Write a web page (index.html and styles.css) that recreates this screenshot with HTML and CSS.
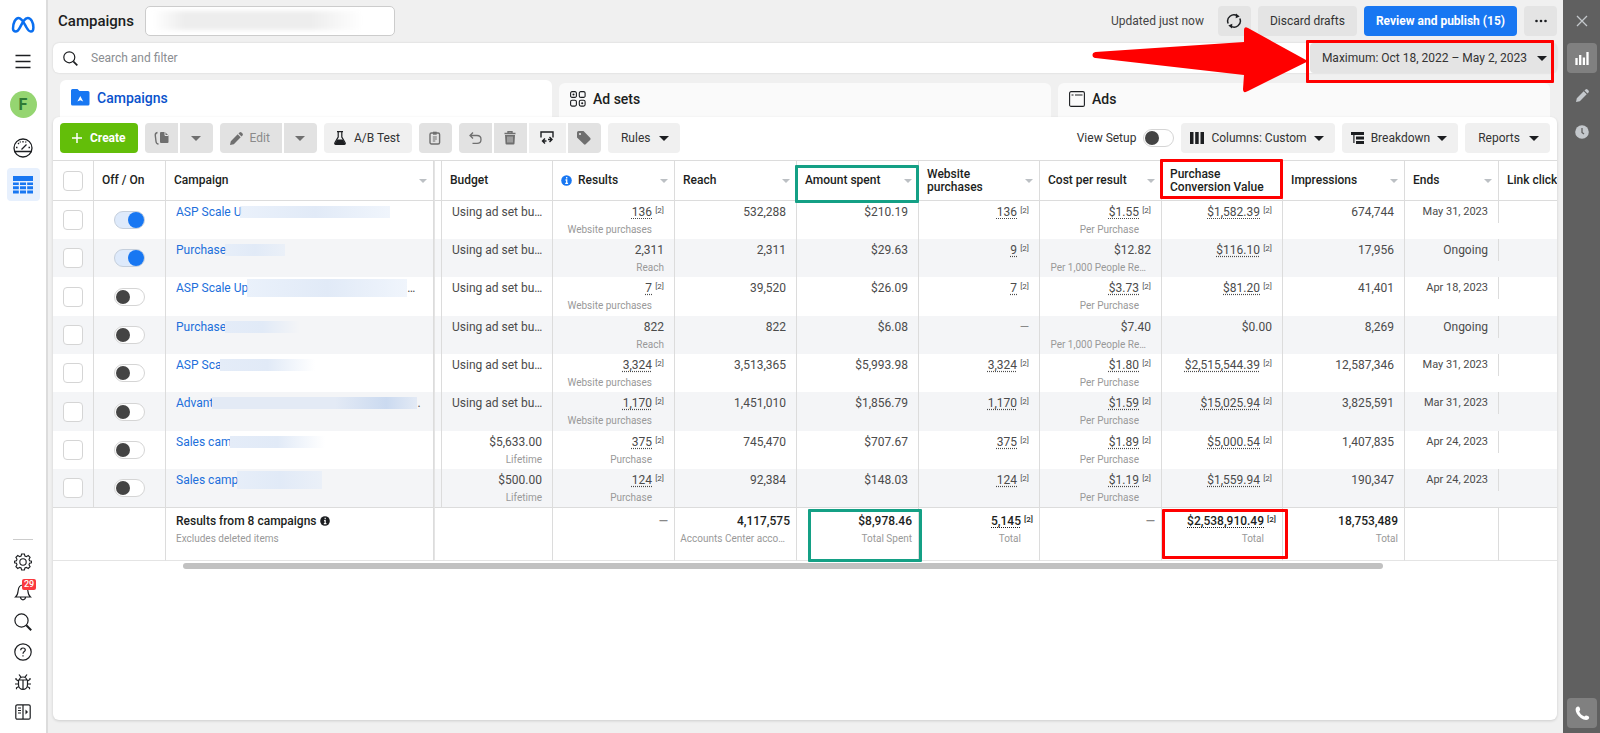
FILE: index.html
```html
<!DOCTYPE html>
<html lang="en">

<head>
  <meta charset="UTF-8">
  <meta name="viewport" content="width=device-width, initial-scale=1.0">
  <title>Campaigns</title>
  <link rel="stylesheet" href="styles.css">
</head>

<body>
  <nav class="sidebar">
    <a href="#" aria-label="Home" class="side-logo"><svg width="24" height="18" viewBox="0 0 24 18"><path d="M2 12.500C2 7 4.500 2 7.500 2c3.500 0 5.500 5 8 9.500 1.500 2.700 2.700 4 4.300 4 1.700 0 2.600-1.500 2.600-4C22.400 6.500 20 2 16.800 2c-3.300 0-5.300 4.500-7.800 9.300-1.400 2.700-2.700 4.200-4.300 4.200-1.700 0-2.700-1.200-2.700-3z" fill="none" stroke="#0a6ff0" stroke-width="2.500"/></svg></a>
    <button class="side-btn" aria-label="Menu"><svg width="16" height="15" viewBox="0 0 16 15"><path d="M.5 1.500h15M.5 7.500h15M.5 13.500h15" stroke="#1c1e21" stroke-width="1.600"/></svg></button>
    <span class="avatar">F</span>
    <button class="side-btn" aria-label="Account overview"><svg width="20" height="20" viewBox="0 0 20 20" fill="none" stroke="#1c1e21" stroke-width="1.300"><circle cx="10" cy="10" r="9"/><path d="M1.500 13.500h17M8.500 11.500l5-5"/><path d="M10 3v1.500M5 5l1 1M3 9.500h1.500M15.500 9.500H17M7 3.500l.5 1M13 3.500l-.5 1"/></svg></button>
    <button class="side-btn active" aria-label="Campaigns table"><svg width="20" height="18" viewBox="0 0 20 18" fill="#1877f2"><path d="M0 0h20v5H0zM0 6.500h5.800v2.600H0zM7 6.500h6v2.600H7zM14.200 6.500H20v2.600h-5.800zM0 10.300h5.800v3H0zM7 10.300h6v3H7zM14.200 10.300H20v3h-5.800zM0 14.600h5.800V17.500H0zM7 14.600h6v2.900H7zM14.200 14.600H20v2.900h-5.800z"/></svg></button>
    <div class="side-bottom">
      <button class="side-small" aria-label="Settings"><svg width="18" height="18" viewBox="0 0 18 18" fill="none" stroke="#1c1e21" stroke-width="1.100"><circle cx="9" cy="9" r="3.200"/><path d="M7.600 1h2.800l.5 2 1.500.6 1.800-1.100 1.900 1.900-1.100 1.800.6 1.500 2 .5v1.600l-2 .5-.6 1.500 1.100 1.800-1.900 1.900-1.800-1.100-1.500.6-.5 2H7.600l-.5-2-1.500-.6-1.800 1.100-1.900-1.900L3 11.800l-.6-1.500-2-.5V8.200l2-.5L3 6.200 1.900 4.400l1.900-1.900 1.800 1.100L7.100 3z"/></svg></button>
      <button class="side-small" aria-label="Notifications"><svg width="18" height="18" viewBox="0 0 18 18" fill="none" stroke="#1c1e21" stroke-width="1.200"><path d="M1.500 14c2-1.500 2.300-3 2.600-6C4.400 4 6 2 9 2s4.600 2 4.900 6c.3 3 .6 4.500 2.600 6zM6.500 14.500c.3 1.600 1.200 2.300 2.500 2.300s2.200-.7 2.500-2.300"/></svg><span class="badge">29</span></button>
      <button class="side-small" aria-label="Search"><svg width="18" height="18" viewBox="0 0 18 18" fill="none" stroke="#1c1e21" stroke-width="1.200"><circle cx="7.500" cy="7.500" r="6.600"/><path d="M12.300 12.300l4.900 4.900" stroke-width="2"/></svg></button>
      <button class="side-small" aria-label="Help"><svg width="18" height="18" viewBox="0 0 18 18" fill="none" stroke="#1c1e21" stroke-width="1.200"><circle cx="9" cy="9" r="8.200"/><path d="M6.700 7.200C6.700 5.600 7.700 5 9 5s2.300.8 2.300 2C11.300 8.600 9 8.600 9 10.700M9 12.300v1.300"/></svg></button>
      <button class="side-small" aria-label="Report a problem"><svg width="18" height="18" viewBox="0 0 18 18" fill="none" stroke="#1c1e21" stroke-width="1.200"><path d="M4.500 7h9v4.500c0 3-2 5-4.500 5s-4.500-2-4.500-5zM5.500 7c0-2 1.500-3 3.500-3s3.500 1 3.500 3M9 7v9.500M5 1.500l2 2.700M13 1.500l-2 2.700M4.500 8L2 6.500V5M4.500 11H1M5 13.500l-2.500 1.300v1.500M13.500 8L16 6.500V5M13.500 11H17M13 13.500l2.500 1.300v1.500"/></svg></button>
      <button class="side-small" aria-label="Expand"><svg width="16" height="16" viewBox="0 0 16 16" fill="none" stroke="#1c1e21" stroke-width="1.200"><rect x=".8" y=".8" width="14.400" height="14.400" rx="1.500"/><path d="M8 1v14M3 4h3M3 6.500h3M3 9h3"/><path d="M10.500 5.500L13 8l-2.500 2.500z" fill="#1c1e21" stroke="none"/></svg></button>
    </div>
  </nav>

  <main class="main">
    <header class="header">
      <h1>Campaigns</h1>
      <div class="account">
        <select aria-label="Ad account"><option></option></select>
        <span class="account-blur"></span>
      </div>
      <div class="header-actions">
        <span class="updated">Updated just now</span>
        <button class="btn dark icon-btn" aria-label="Refresh"><svg width="16" height="16" viewBox="0 0 16 16" fill="none" stroke="#1c1e21" stroke-width="1.500"><path d="M2.200 10.500A6.200 6.200 0 0 1 11.500 3M13.800 5.500A6.200 6.200 0 0 1 4.500 13"/><path d="M10 .500l3.700 3-4 1.700zM6 15.500l-3.700-3 4-1.700z" fill="#1c1e21" stroke="none"/></svg></button>
        <button class="btn dark wide">Discard drafts</button>
        <button class="btn primary">Review and publish (15)</button>
        <button class="btn dark icon-btn" aria-label="More"><svg width="12" height="4" viewBox="0 0 12 4" fill="#1c1e21"><circle cx="1.500" cy="2" r="1.300"/><circle cx="6" cy="2" r="1.300"/><circle cx="10.500" cy="2" r="1.300"/></svg></button>
      </div>
    </header>

    <div class="search-bar">
      <svg width="15" height="15" viewBox="0 0 15 15" fill="none" stroke="#1c1e21" stroke-width="1.200"><circle cx="6.300" cy="6.300" r="5.500"/><path d="M10.300 10.300l4 4" stroke-width="1.700"/></svg>
      <input type="search" placeholder="Search and filter" aria-label="Search and filter">
      <button class="btn dark date-btn">Maximum: Oct 18, 2022 – May 2, 2023<i class="caret"></i></button>
      <span class="mark red date-mark"></span>
      <svg class="arrow" width="216" height="66" viewBox="0 0 216 66"><path d="M3.500 25L152 15V3q0-4 4-2l58 32q2 1 0 2.300L156 64q-5 3-5-2l1-14L3.500 31q-3-.5-3-3t3-3z" fill="#f00"/></svg>
    </div>

    <div class="tabs">
      <a href="#" class="tab selected"><svg width="19" height="17" viewBox="0 0 19 17"><path d="M1.500 0h5l2 2H17q1.500 0 1.500 1.500V15q0 1.500-1.500 1.500H1.500Q0 16.500 0 15V1.500Q0 0 1.500 0z" fill="#1877f2"/><path d="M9.300 7l2.900 5.500-2.900-1.300-2.900 1.300z" fill="#fff"/></svg>Campaigns</a>
      <a href="#" class="tab"><svg width="16" height="16" viewBox="0 0 16 16" fill="none" stroke="#1c1e21" stroke-width="1.100"><rect x=".6" y=".6" width="5.800" height="5.800" rx="1.500"/><rect x="9.300" y=".6" width="5.800" height="5.800" rx="1.500"/><rect x=".6" y="9.300" width="5.800" height="5.800" rx="1.500"/><rect x="9.300" y="9.300" width="5.800" height="5.800" rx="1.500"/><circle cx="3.500" cy="3.500" r=".5"/><circle cx="12.200" cy="12.200" r=".5"/></svg>Ad sets</a>
      <a href="#" class="tab"><svg width="16" height="16" viewBox="0 0 16 16" fill="none" stroke="#1c1e21" stroke-width="1.100"><rect x=".6" y=".6" width="14.800" height="14.800" rx="1.500"/><path d="M2.500 4h2M6 4h7.500"/></svg>Ads</a>
    </div>

    <section class="panel">
      <div class="toolbar">
        <button class="btn create"><svg width="10" height="10" viewBox="0 0 10 10"><path d="M5 0v10M0 5h10" stroke="#fff" stroke-width="1.500"/></svg>Create</button>
        <div class="group">
          <button class="btn off icon-btn" aria-label="Duplicate"><svg width="15" height="14" viewBox="0 0 15 14"><path d="M7 1h4l3.500 3.500V11q0 1-1 1H7q-1 0-1-1V2q0-1 1-1z" fill="#6f6f6f"/><path d="M11 1v3.500h3.500" stroke="#e4e4e4" fill="none"/><path d="M3.500 1.500Q1 2 1.300 4.500l.7 6Q2.300 13 4.500 13" fill="none" stroke="#6f6f6f" stroke-width="1.400"/></svg></button>
          <button class="btn off icon-btn" aria-label="Duplicate options"><i class="caret"></i></button>
        </div>
        <div class="group">
          <button class="btn off edit"><svg width="13" height="13" viewBox="0 0 13 13" fill="#6f6f6f"><path d="M0 13l.8-3.800L7.700 2.300l3 3L3.800 12.200zM8.500 1.500l1-1q1-.8 2 0l1 1q.8 1 0 2l-1 1z"/></svg>Edit</button>
          <button class="btn off icon-btn" aria-label="Edit options"><i class="caret"></i></button>
        </div>
        <button class="btn ab"><svg width="12" height="14" viewBox="0 0 12 14"><path d="M3 .7h6M4.200 1v5L1 11.500q-.8 1.800 1 1.800h8q1.800 0 1-1.800L7.800 6V1" fill="none" stroke="#1c1e21" stroke-width="1.200"/><path d="M3.300 8.500h5.400l2.500 4-.8.900H1.500l-.7-1z" fill="#1c1e21"/></svg>A/B Test</button>
        <button class="btn off icon-btn" aria-label="Paste"><svg width="12" height="14" viewBox="0 0 12 14" fill="none" stroke="#6f6f6f" stroke-width="1.400"><rect x="1" y="2" width="9.600" height="11" rx="1.500"/><path d="M4 2.200h3.700" stroke-width="3"/><path d="M3.800 6h4M3.800 8h4M3.800 10h2.500" stroke-width="1"/></svg></button>
        <div class="group">
          <button class="btn off icon-btn" aria-label="Undo"><svg width="13" height="12" viewBox="0 0 13 12" fill="none" stroke="#6f6f6f" stroke-width="1.300"><path d="M1 3.500h7q4 0 4 3.900T8 11.300H3.500M4 .5l-3 3 3 3"/></svg></button>
          <button class="btn off icon-btn" aria-label="Delete"><svg width="12" height="14" viewBox="0 0 12 14"><path d="M.5 2.500h11M4 2V.8h4V2" fill="none" stroke="#6f6f6f" stroke-width="1.400"/><path d="M1 4h10l-.5 8.500q0 1-1 1h-7q-1 0-1-1z" fill="#6f6f6f"/><path d="M4 5.500v6M6 5.500v6M8 5.500v6" stroke="#e4e4e4" stroke-width=".8"/></svg></button>
          <button class="btn light-icon" aria-label="Export and import"><svg width="14" height="14" viewBox="0 0 14 14" fill="none" stroke="#1c1e21" stroke-width="1.400"><path d="M1 6.500V1h12v5.500M3 10h3.500M5 7.500L2.500 10 5 12.500M8 8.500h4M9.500 6L12 8.500 9.500 11"/></svg></button>
          <button class="btn off icon-btn" aria-label="Tag"><svg width="14" height="14" viewBox="0 0 14 14"><path d="M0 1.500Q0 0 1.500 0h5L13.300 7q.7 1 0 1.700l-4.600 4.600q-1 .7-1.700 0L0 6.500z" fill="#6f6f6f"/><circle cx="3" cy="3" r="1.100" fill="#e4e4e4"/></svg></button>
        </div>
        <button class="btn rules">Rules<i class="caret"></i></button>

        <div class="toolbar-right">
          <label class="view-setup">View Setup<input type="checkbox" class="toggle"></label>
          <button class="btn menu"><svg width="14" height="12" viewBox="0 0 14 12" fill="#1c1e21"><path d="M0 0h3.500v12H0zM5.200 0h3.500v12H5.200zM10.500 0H14v12h-3.500z"/></svg>Columns: Custom<i class="caret"></i></button>
          <button class="btn menu"><svg width="13" height="12" viewBox="0 0 13 12" fill="#1c1e21"><path d="M0 0h13v3H0zM5 4.500h8v3H5zM5 9h8v3H5zM2.300 3h1.200v8H2.300z"/></svg>Breakdown<i class="caret"></i></button>
          <button class="btn reports">Reports<i class="caret"></i></button>
        </div>
      </div>

      <div class="table-wrap">
        <table>
          <colgroup>
            <col class="c-check"><col class="c-onoff"><col class="c-name"><col class="c-split"><col class="c-budget">
            <col class="c-num"><col class="c-num"><col class="c-num"><col class="c-alt"><col class="c-num"><col class="c-alt"><col class="c-num">
            <col class="c-ends"><col>
          </colgroup>
          <thead>
            <tr>
              <th class="check"><input type="checkbox" aria-label="Select all"></th>
              <th>Off / On</th>
              <th><div class="th">Campaign<i class="sort"></i></div></th>
              <th class="split"></th>
              <th>Budget</th>
              <th><div class="th"><svg class="info" width="11" height="11" viewBox="0 0 11 11"><circle cx="5.500" cy="5.500" r="5.300" fill="#1877f2"/><path d="M5.700 2v1.500M4.500 5h1.200v3.300M4.200 8.300h2.900" stroke="#fff" stroke-width="1.300" fill="none"/></svg>Results<i class="sort"></i></div></th>
              <th><div class="th">Reach<i class="sort"></i></div></th>
              <th><div class="th">Amount spent<i class="sort"></i></div><span class="mark green spent-head"></span></th>
              <th><div class="th">Website<br>purchases<i class="sort"></i></div></th>
              <th><div class="th">Cost per result<i class="sort"></i></div></th>
              <th>Purchase<br>Conversion Value<span class="mark red value-head"></span></th>
              <th><div class="th">Impressions<i class="sort"></i></div></th>
              <th><div class="th">Ends<i class="sort"></i></div></th>
              <th class="last">Link click</th>
            </tr>
          </thead>
          <tbody>
            <tr>
              <td class="check"><input type="checkbox" aria-label="Select row"></td>
              <td class="onoff"><input type="checkbox" class="toggle" aria-label="On" checked></td>
              <td class="name"><div><a href="#">ASP Scale U</a><span class="smudge w150"></span></div></td>
              <td class="split"></td>
              <td class="text">Using ad set bu…</td>
              <td class="ref"><u>136</u><sup>[2]</sup><small>Website purchases</small></td>
              <td>532,288</td>
              <td>$210.19</td>
              <td class="ref"><u>136</u><sup>[2]</sup></td>
              <td class="ref"><u>$1.55</u><sup>[2]</sup><small>Per Purchase</small></td>
              <td class="ref"><u>$1,582.39</u><sup>[2]</sup></td>
              <td>674,744</td>
              <td class="date">May 31, 2023</td>
              <td class="last"></td>
            </tr>
            <tr>
              <td class="check"><input type="checkbox" aria-label="Select row"></td>
              <td class="onoff"><input type="checkbox" class="toggle" aria-label="On" checked></td>
              <td class="name"><div><a href="#">Purchase</a><span class="smudge w60"></span></div></td>
              <td class="split"></td>
              <td class="text">Using ad set bu…</td>
              <td>2,311<small>Reach</small></td>
              <td>2,311</td>
              <td>$29.63</td>
              <td class="ref"><u>9</u><sup>[2]</sup></td>
              <td>$12.82<small class="cut">Per 1,000 People Re…</small></td>
              <td class="ref"><u>$116.10</u><sup>[2]</sup></td>
              <td>17,956</td>
              <td>Ongoing</td>
              <td class="last"></td>
            </tr>
            <tr>
              <td class="check"><input type="checkbox" aria-label="Select row"></td>
              <td class="onoff"><input type="checkbox" class="toggle" aria-label="Off"></td>
              <td class="name"><div><a href="#">ASP Scale Up</a><span class="smudge w160 tall"></span>…</div></td>
              <td class="split"></td>
              <td class="text">Using ad set bu…</td>
              <td class="ref"><u>7</u><sup>[2]</sup><small>Website purchases</small></td>
              <td>39,520</td>
              <td>$26.09</td>
              <td class="ref"><u>7</u><sup>[2]</sup></td>
              <td class="ref"><u>$3.73</u><sup>[2]</sup><small>Per Purchase</small></td>
              <td class="ref"><u>$81.20</u><sup>[2]</sup></td>
              <td>41,401</td>
              <td class="date">Apr 18, 2023</td>
              <td class="last"></td>
            </tr>
            <tr>
              <td class="check"><input type="checkbox" aria-label="Select row"></td>
              <td class="onoff"><input type="checkbox" class="toggle" aria-label="Off"></td>
              <td class="name"><div><a href="#">Purchase</a><span class="smudge w75 fade"></span></div></td>
              <td class="split"></td>
              <td class="text">Using ad set bu…</td>
              <td>822<small>Reach</small></td>
              <td>822</td>
              <td>$6.08</td>
              <td class="none">—</td>
              <td>$7.40<small class="cut">Per 1,000 People Re…</small></td>
              <td>$0.00</td>
              <td>8,269</td>
              <td>Ongoing</td>
              <td class="last"></td>
            </tr>
            <tr>
              <td class="check"><input type="checkbox" aria-label="Select row"></td>
              <td class="onoff"><input type="checkbox" class="toggle" aria-label="Off"></td>
              <td class="name"><div><a href="#">ASP Sca</a><span class="smudge w95 fade"></span></div></td>
              <td class="split"></td>
              <td class="text">Using ad set bu…</td>
              <td class="ref"><u>3,324</u><sup>[2]</sup><small>Website purchases</small></td>
              <td>3,513,365</td>
              <td>$5,993.98</td>
              <td class="ref"><u>3,324</u><sup>[2]</sup></td>
              <td class="ref"><u>$1.80</u><sup>[2]</sup><small>Per Purchase</small></td>
              <td class="ref"><u>$2,515,544.39</u><sup>[2]</sup></td>
              <td>12,587,346</td>
              <td class="date">May 31, 2023</td>
              <td class="last"></td>
            </tr>
            <tr>
              <td class="check"><input type="checkbox" aria-label="Select row"></td>
              <td class="onoff"><input type="checkbox" class="toggle" aria-label="Off"></td>
              <td class="name"><div><a href="#">Advant</a><span class="smudge w205 deep"></span>.</div></td>
              <td class="split"></td>
              <td class="text">Using ad set bu…</td>
              <td class="ref"><u>1,170</u><sup>[2]</sup><small>Website purchases</small></td>
              <td>1,451,010</td>
              <td>$1,856.79</td>
              <td class="ref"><u>1,170</u><sup>[2]</sup></td>
              <td class="ref"><u>$1.59</u><sup>[2]</sup><small>Per Purchase</small></td>
              <td class="ref"><u>$15,025.94</u><sup>[2]</sup></td>
              <td>3,825,591</td>
              <td class="date">Mar 31, 2023</td>
              <td class="last"></td>
            </tr>
            <tr>
              <td class="check"><input type="checkbox" aria-label="Select row"></td>
              <td class="onoff"><input type="checkbox" class="toggle" aria-label="Off"></td>
              <td class="name"><div><a href="#">Sales cam</a><span class="smudge w95 fade"></span></div></td>
              <td class="split"></td>
              <td>$5,633.00<small>Lifetime</small></td>
              <td class="ref"><u>375</u><sup>[2]</sup><small>Purchase</small></td>
              <td>745,470</td>
              <td>$707.67</td>
              <td class="ref"><u>375</u><sup>[2]</sup></td>
              <td class="ref"><u>$1.89</u><sup>[2]</sup><small>Per Purchase</small></td>
              <td class="ref"><u>$5,000.54</u><sup>[2]</sup></td>
              <td>1,407,835</td>
              <td class="date">Apr 24, 2023</td>
              <td class="last"></td>
            </tr>
            <tr>
              <td class="check"><input type="checkbox" aria-label="Select row"></td>
              <td class="onoff"><input type="checkbox" class="toggle" aria-label="Off"></td>
              <td class="name"><div><a href="#">Sales camp</a><span class="smudge w85 tall"></span></div></td>
              <td class="split"></td>
              <td>$500.00<small>Lifetime</small></td>
              <td class="ref"><u>124</u><sup>[2]</sup><small>Purchase</small></td>
              <td>92,384</td>
              <td>$148.03</td>
              <td class="ref"><u>124</u><sup>[2]</sup></td>
              <td class="ref"><u>$1.19</u><sup>[2]</sup><small>Per Purchase</small></td>
              <td class="ref"><u>$1,559.94</u><sup>[2]</sup></td>
              <td>190,347</td>
              <td class="date">Apr 24, 2023</td>
              <td class="last"></td>
            </tr>
          </tbody>
          <tfoot>
            <tr>
              <td colspan="2"></td>
              <td class="summary">Results from 8 campaigns <svg width="10" height="10" viewBox="0 0 11 11"><circle cx="5.500" cy="5.500" r="5.300" fill="#1c1e21"/><path d="M5.700 2v1.500M4.500 5h1.200v3.300M4.200 8.300h2.900" stroke="#fff" stroke-width="1.300" fill="none"/></svg><small>Excludes deleted items</small></td>
              <td colspan="2" class="split-foot"></td>
              <td class="none">—</td>
              <td>4,117,575<small class="cut">Accounts Center acco…</small></td>
              <td>$8,978.46<small>Total Spent</small><span class="mark green spent-total"></span></td>
              <td class="ref"><u>5,145</u><sup>[2]</sup><small>Total</small></td>
              <td class="none">—</td>
              <td class="ref"><u>$2,538,910.49</u><sup>[2]</sup><small>Total</small><span class="mark red value-total"></span></td>
              <td>18,753,489<small>Total</small></td>
              <td></td>
              <td class="last"></td>
            </tr>
          </tfoot>
        </table>
      </div>
      <div class="scroll-track"><div class="scroll-thumb"></div></div>
    </section>
  </main>

  <aside class="rail">
    <button class="rail-btn" aria-label="Close"><svg width="12" height="12" viewBox="0 0 12 12"><path d="M1 1l10 10M11 1L1 11" stroke="#c4c8cc" stroke-width="1.300"/></svg></button>
    <button class="rail-btn active" aria-label="Charts"><svg width="14" height="13" viewBox="0 0 14 13"><path d="M1.500 13V6M5.200 13V3M8.900 13V5.500M12.500 13V0" stroke="#fff" stroke-width="2.300"/></svg></button>
    <button class="rail-btn" aria-label="Edit"><svg width="13" height="13" viewBox="0 0 13 13" fill="#c4c8cc"><path d="M0 13l.8-3.800L7.700 2.300l3 3L3.800 12.200zM8.500 1.500l1-1q1-.8 2 0l1 1q.8 1 0 2l-1 1z"/></svg></button>
    <button class="rail-btn" aria-label="History"><svg width="14" height="14" viewBox="0 0 14 14"><circle cx="7" cy="7" r="6.800" fill="#c4c8cc"/><path d="M7 3v4.500l2 1.500" stroke="#606060" stroke-width="1.300" fill="none"/></svg></button>
    <button class="rail-btn active call" aria-label="Call"><svg width="15" height="15" viewBox="0 0 15 15"><path d="M1.200 1.500C2.500.2 4 .3 4.700 1.800c.7 1.500.6 2.500-.5 3.500.7 2.300 2.600 4.300 5.200 5.300 1-1.200 2-1.300 3.600-.5 1.500.8 1.500 2 .3 3.200-1.300 1.300-4.500 1-7.800-1.500C1.500 8.800-.5 3.800 1.200 1.500z" fill="#fff"/></svg></button>
  </aside>
</body>

</html>
```
FILE: styles.css
```css
* {
  box-sizing: border-box;
}

body {
  margin: 0;
  height: 100vh;
  display: flex;
  overflow: hidden;
  background-color: #f0f0f0;
  color: #1c1e21;
  font-family: Roboto, "Liberation Sans", sans-serif;
  font-size: 12px;
}

button,
input,
select {
  font-family: inherit;
  font-size: 12px;
  color: inherit;
  margin: 0;
}

button {
  border: none;
  padding: 0;
  background: none;
  cursor: pointer;
}

a {
  color: #216fdb;
  text-decoration: none;
}

svg {
  flex: none;
}

/* left sidebar */
.sidebar {
  flex: none;
  width: 48px;
  padding: 8px 0 6px;
  display: flex;
  flex-direction: column;
  align-items: center;
  background-color: #fff;
  border-right: 2px solid #dcdcdc;
}

.side-logo,
.side-btn {
  width: 33px;
  height: 33px;
  margin-bottom: 4px;
  display: flex;
  align-items: center;
  justify-content: center;
  border-radius: 4px;
}

.side-btn.active {
  background-color: #e7f0fd;
}

.avatar {
  width: 27px;
  height: 27px;
  margin: 9px 0 13px;
  border-radius: 50%;
  background-color: #95d571;
  color: #2f7a35;
  font-size: 16px;
  font-weight: 700;
  line-height: 27px;
  text-align: center;
}

.side-bottom {
  width: 20px;
  margin-top: auto;
  padding-top: 7px;
  border-top: 1px solid #ccc;
}

.side-small {
  position: relative;
  width: 20px;
  height: 30px;
  display: flex;
  align-items: center;
  justify-content: center;
}

.badge {
  position: absolute;
  top: 2px;
  left: 9px;
  padding: 0 2px;
  border-radius: 2px;
  background-color: #fa383e;
  color: #fff;
  font-size: 9px;
  font-weight: 500;
  line-height: 11px;
}

/* main area */
.main {
  flex: 1;
  min-width: 0;
  padding: 6px 6px 13px 5px;
  display: flex;
  flex-direction: column;
}

.header {
  display: flex;
  align-items: center;
  padding-left: 5px;
  margin-bottom: 7px;
}

h1 {
  margin: 0 11px 0 0;
  font-size: 15px;
  font-weight: 500;
}

.account {
  position: relative;
  width: 250px;
  height: 30px;
}

.account select {
  width: 100%;
  height: 100%;
  appearance: none;
  background-color: #fff;
  border: 1px solid #ccc;
  border-radius: 5px;
}

.account-blur {
  position: absolute;
  top: 5px;
  left: 8px;
  width: 210px;
  height: 19px;
  background: linear-gradient(90deg, #fff, #ededed 15%, #ededed 75%, #fff);
  filter: blur(2px);
}

.header-actions {
  margin-left: auto;
  display: flex;
  align-items: center;
  gap: 7px;
}

.updated {
  margin-right: 7px;
  color: #444;
}

.btn {
  height: 30px;
  display: flex;
  align-items: center;
  justify-content: center;
  border-radius: 4px;
  background-color: #f0f0f0;
  color: #333;
  white-space: nowrap;
}

.btn.dark {
  background-color: #e4e4e4;
}

.btn.off {
  background-color: #e2e2e2;
  color: #8a8a8a;
}

.icon-btn {
  width: 33px;
}

.btn.wide {
  padding: 0 12px;
}

.btn.primary {
  padding: 0 12px;
  background-color: #1877f2;
  color: #fff;
  font-weight: 700;
}

.caret {
  width: 0;
  border: 5px solid transparent;
  border-top: 5px solid #1c1e21;
  border-bottom: none;
}

.off .caret {
  border-top-color: #6f6f6f;
}

.search-bar {
  position: relative;
  height: 30px;
  margin-bottom: 7px;
  padding-left: 10px;
  display: flex;
  align-items: center;
  background-color: #fff;
  border-radius: 6px;
  box-shadow: 0 0 2px rgba(0, 0, 0, 0.15);
}

.search-bar input {
  flex: 1;
  margin-left: 13px;
  padding: 0;
  border: none;
  outline: none;
  background: none;
}

.search-bar input::placeholder {
  color: #8a8d91;
}

.date-btn {
  padding: 0 10px 0 12px;
  gap: 10px;
}

/* highlight boxes and arrow */
.mark {
  position: absolute;
  border: 3px solid;
  border-radius: 1px;
  pointer-events: none;
  z-index: 2;
}

.red {
  border-color: #f00;
}

.green {
  border-color: #14a085;
}

.date-mark {
  top: -3px;
  right: 3px;
  bottom: -10px;
  width: 248px;
}

.arrow {
  position: absolute;
  top: -16px;
  right: 249px;
  z-index: 2;
}

.spent-head {
  inset: 4px -1px -3px -2px;
}

.value-head {
  inset: -2px -1px 1px -2px;
}

.spent-total {
  inset: 1px -4px -2px 11px;
}

.value-total {
  inset: 1px -6px 1px 0;
}

/* tabs */
.tabs {
  display: flex;
  align-items: flex-end;
  gap: 7px;
  padding: 0 7px;
}

.tab {
  flex: 1;
  height: 34px;
  padding: 0 0 2px 11px;
  display: flex;
  align-items: center;
  gap: 7px;
  border-radius: 6px 6px 0 0;
  background-color: #fafafa;
  color: #1c1e21;
  font-size: 14px;
  font-weight: 500;
}

.tab.selected {
  height: 37px;
  background-color: #fff;
  color: #0a52cc;
}

/* table panel */
.panel {
  flex: 1;
  background-color: #fff;
  border-radius: 6px;
  box-shadow: 0 1px 3px rgba(0, 0, 0, 0.15);
}

.tabs,
.panel {
  position: relative;
}

.toolbar {
  display: flex;
  align-items: center;
  gap: 7px;
  padding: 6px 7px 7px;
}

.group {
  display: flex;
  gap: 2px;
}

.group .btn {
  border-radius: 0;
}

.group .btn:first-child {
  border-radius: 4px 0 0 4px;
}

.group .btn:last-child {
  border-radius: 0 4px 4px 0;
}

.btn.create {
  padding: 0 12px;
  gap: 8px;
  background-color: #63be09;
  color: #fff;
  font-weight: 700;
}

.edit {
  padding: 0 12px 0 10px;
  gap: 7px;
}

.ab {
  padding: 0 12px 0 10px;
  gap: 8px;
}

.light-icon {
  width: 37px;
}

.rules,
.reports {
  padding: 0 11px 0 13px;
  gap: 9px;
}

.menu {
  padding: 0 11px 0 9px;
  gap: 7px;
}

.toolbar-right {
  margin-left: auto;
  display: flex;
  gap: 7px;
}

.view-setup {
  display: flex;
  align-items: center;
  gap: 7px;
  color: #333;
}

.toggle {
  appearance: none;
  flex: none;
  width: 31px;
  height: 18px;
  padding: 1px;
  border: 1px solid #d5d5d5;
  border-radius: 9px;
  background-color: #fff;
}

.toggle::before {
  content: "";
  display: block;
  width: 14px;
  height: 14px;
  border-radius: 50%;
  background-color: #444;
}

.toggle:checked {
  padding: 0;
  background-color: #deeafb;
  border-color: #c5cfdc;
}

.toggle:checked::before {
  width: 16px;
  height: 16px;
  margin-left: auto;
  background-color: #1877f2;
}

.table-wrap {
  overflow-x: clip;
}

table {
  width: 100%;
  table-layout: fixed;
  border-collapse: separate;
  border-spacing: 0;
}

.c-check {
  width: 41px;
}

.c-onoff {
  width: 72px;
}

.c-name {
  width: 268px;
}

.c-split {
  width: 8px;
}

.c-budget {
  width: 111px;
}

.c-num {
  width: 122px;
}

.c-alt {
  width: 121px;
}

.c-ends {
  width: 94px;
}

th {
  position: relative;
  height: 41px;
  padding: 0 8px;
  border: 1px solid #dcdcdc;
  border-left: none;
  font-weight: 500;
  line-height: 13px;
  text-align: left;
  white-space: nowrap;
}

.th {
  position: relative;
  display: flex;
  align-items: center;
}

.th .sort {
  position: absolute;
  right: -2px;
}

.sort {
  border: 4px solid transparent;
  border-top-color: #bcc0c4;
  border-bottom: none;
}

.info {
  margin-right: 6px;
}

td {
  position: relative;
  height: 38px;
  padding: 2px 10px 0;
  border-right: 1px solid #dcdcdc;
  color: #4b4b4b;
  line-height: 18px;
  text-align: right;
  vertical-align: top;
  white-space: nowrap;
}

tbody tr:nth-child(even) {
  background-color: #f4f5f7;
}

/* rows average a third of a pixel over 38 */
tbody tr:nth-child(3n) td {
  height: 39px;
}

.check,
td.onoff {
  padding: 0;
  text-align: center;
  vertical-align: middle;
}

.check input,
td .toggle {
  display: block;
  margin: 0 auto;
}

.check input {
  appearance: none;
  width: 20px;
  height: 20px;
  border: 1px solid #d5d5d5;
  border-radius: 4px;
  background-color: #fff;
}

td.name,
td.text,
td.summary {
  text-align: left;
}

td.text {
  padding-right: 0;
}

td.name > div {
  display: flex;
  align-items: center;
}

th.split,
td.split {
  padding: 0;
}

th.split,
td.split,
.split-foot {
  border-left: 1px solid #e4e4e4;
}

th.last,
td.last {
  border-right: none;
}

th.last {
  padding-right: 0;
}

tbody td:nth-last-child(2) {
  border-right: none;
  padding-right: 11px;
  background: linear-gradient(#dcdcdc, #dcdcdc) right top / 1px 22px no-repeat;
}

td.date {
  font-size: 11px;
}

td.ref small {
  margin-right: 12px;
}

u {
  text-decoration: underline dotted;
  text-underline-offset: 2px;
}

sup {
  display: inline-block;
  width: 12px;
  font-size: 8px;
  line-height: 8px;
  vertical-align: 3px;
}

small {
  display: block;
  color: #999;
  font-size: 10px;
  line-height: 17px;
}

small.cut {
  margin: 0 5px 0 -10px;
}

.none {
  color: #888;
}

.smudge {
  height: 12px;
  margin-left: -1px;
  background: linear-gradient(90deg, rgba(225, 235, 249, 0.7), #e1eaf7 50%, rgba(225, 235, 249, 0.5));
}

.smudge.fade {
  background: linear-gradient(90deg, #e4ecf8, #e1eaf7 50%, rgba(225, 235, 249, 0));
}

.smudge.deep {
  background: linear-gradient(90deg, #e3eaf5 60%, #cbdaf0 85%, #e3eaf5);
}

.smudge.tall {
  height: 18px;
}

.w60 { width: 60px; }
.w75 { width: 75px; }
.w85 { width: 85px; }
.w95 { width: 95px; }
.w150 { width: 150px; }
.w160 { width: 160px; }
.w205 { width: 205px; }

tfoot td {
  height: 54px;
  padding-top: 4px;
  padding-right: 6px;
  border-top: 1px solid #dcdcdc;
  border-bottom: 1px solid #e4e4e4;
  color: #1c1e21;
  font-weight: 500;
}

tfoot small {
  font-weight: 400;
}

.summary svg {
  vertical-align: -1px;
}

.scroll-track {
  padding: 2px 174px 0 130px;
}

.scroll-thumb {
  height: 6px;
  border-radius: 3px;
  background-color: #c1c1c1;
}

/* right rail */
.rail {
  flex: none;
  width: 37px;
  padding: 6px 4px 5px;
  display: flex;
  flex-direction: column;
  gap: 7px;
  background-color: #606060;
}

.rail-btn {
  width: 30px;
  height: 30px;
  display: flex;
  align-items: center;
  justify-content: center;
  border-radius: 4px;
}

.rail-btn.active {
  background-color: #808080;
}

.call {
  margin-top: auto;
}
```
